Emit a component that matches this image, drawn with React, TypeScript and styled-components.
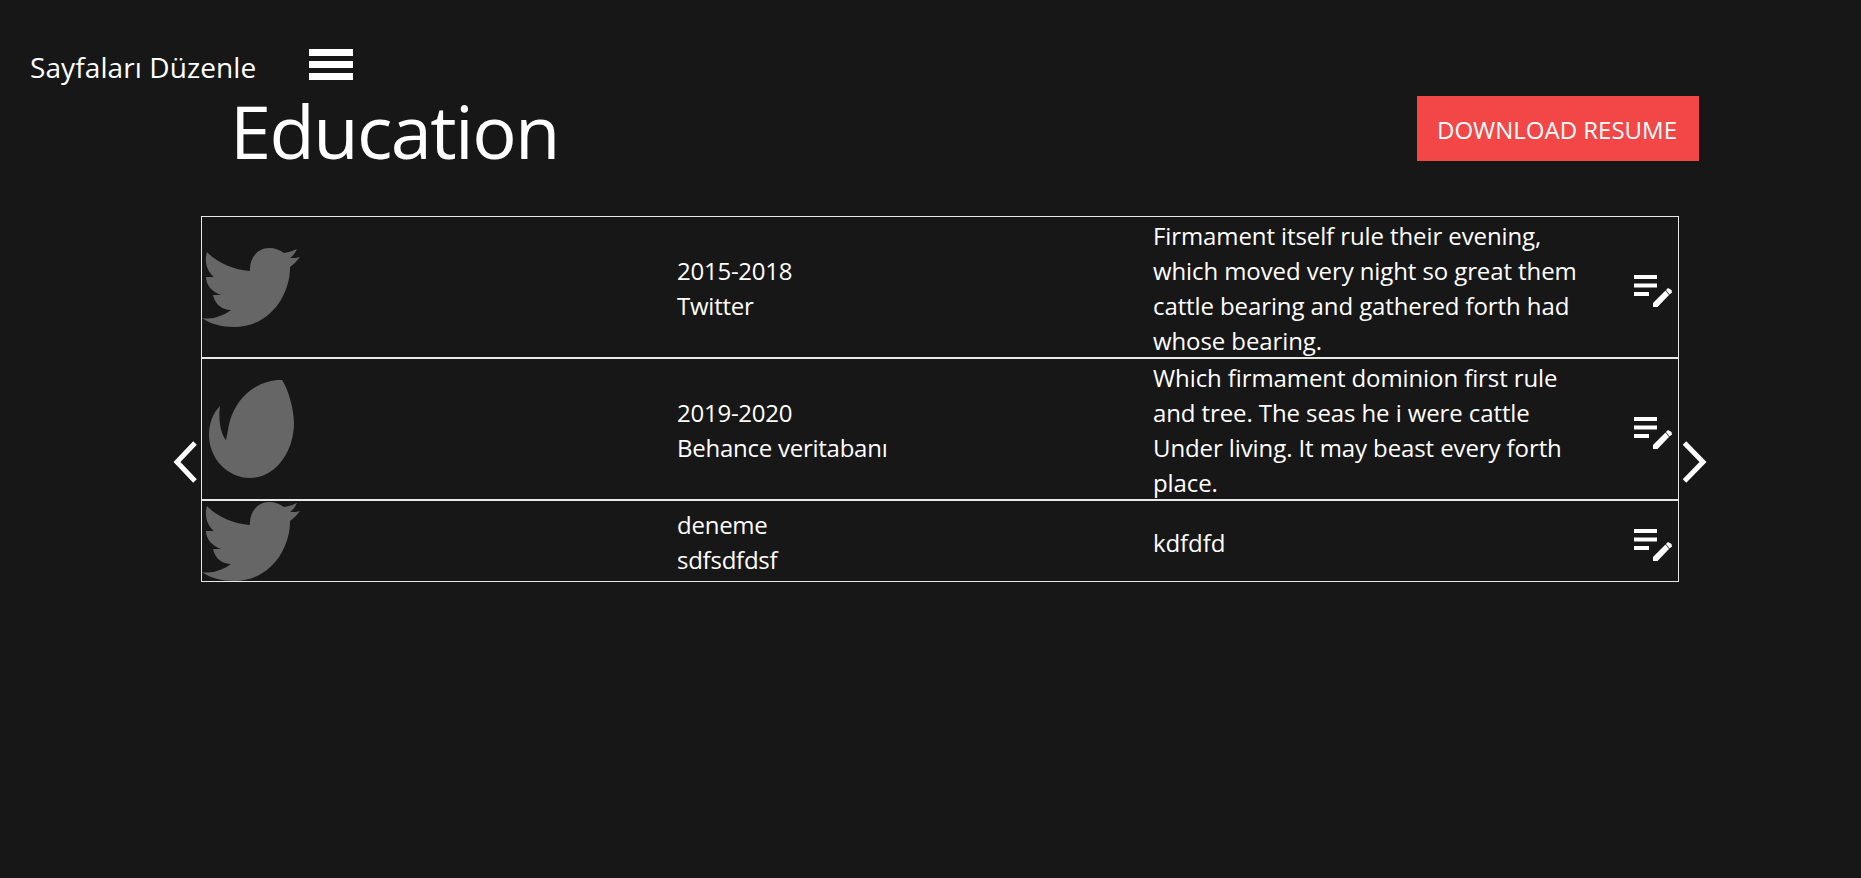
import React from "react";
import styled, { createGlobalStyle } from "styled-components";

const GlobalStyle = createGlobalStyle`
  html, body {
    margin: 0;
    padding: 0;
    background-color: #171717;
    color: #fff;
    font-family: "Open Sans", "Noto Sans", sans-serif;
  }
`;

const Page = styled.div`
  min-height: 878px;
  background-color: #171717;
  overflow: hidden;
`;

const TopBar = styled.nav`
  display: flex;
  align-items: center;
  height: 44px;
  margin-top: 45px;
  padding-left: 30px;
`;

const NavLabel = styled.span`
  font-size: 28px;
  letter-spacing: 0.1px;
  white-space: nowrap;
`;

const MenuButton = styled.div`
  display: flex;
  flex-direction: column;
  gap: 5px;
  width: 44px;
  margin-left: 53px;
  margin-top: -6px;
  span {
    display: block;
    height: 7px;
    background: #fff;
  }
`;

const Header = styled.header`
  display: flex;
  justify-content: space-between;
  align-items: flex-start;
  height: 125px;
  padding: 7px 162px 0 230px;
  margin-top: -5px;
`;

const Title = styled.h1`
  margin: 0;
  font-size: 74px;
  font-weight: 400;
  line-height: 80px;
  letter-spacing: -1.6px;
`;

const DownloadButton = styled.button`
  width: 282px;
  height: 65px;
  margin-top: 5px;
  padding: 2px 2px 0 0;
  border: none;
  background-color: #f34646;
  color: #fff;
  font-family: inherit;
  font-size: 24px;
  letter-spacing: 0;
`;

const Slider = styled.section`
  position: relative;
  width: 1478px;
  margin-left: 201px;
`;

const Table = styled.div`
  border: 1px solid #e8e8e8;
`;

const Row = styled.div`
  display: grid;
  grid-template-columns: 475px 476px 481px 1fr;
  align-items: center;
  min-height: 80px;
  & + & {
    border-top: 2px solid #e8e8e8;
  }
`;

const LogoCell = styled.div`
  display: flex;
  align-items: center;
  height: 100%;
`;

const TextCell = styled.div`
  font-size: 24px;
  line-height: 35px;
  letter-spacing: -0.25px;
  transform: translateY(1px);
`;

const DescCell = styled(TextCell)`
  padding-right: 45px;
  letter-spacing: -0.1px;
`;

const EditCell = styled.div`
  display: flex;
  align-items: center;
  height: 100%;
  svg {
    margin-top: 7px;
  }
`;

const Arrow = styled.div<{ $side: "left" | "right" }>`
  position: absolute;
  top: 224px;
  ${(p) => (p.$side === "left" ? "left: -30px;" : "right: -30px;")}
  width: 28px;
  height: 44px;
  line-height: 0;
`;

function TwitterLogo() {
  return (
    <svg width="100" height="80" viewBox="0 0 100 80" fill="#666666">
      <path d="M5 5 C14 15 31 23 48 24 C47 12 55 1 67 1 C73 1 78 3 82 6 C87 5 91 4 95 2 C93 6 91 9 88 11 C92 11 95 11 98 10 C95 14 92 17 88 20 C88.500 45 70 80 32 80 C20 80 8 77 0 71 C10 73 21 69 29 63 C21 63 13 58 11 48 L19 48 C10 45 4 38 4 30 L12 30 C5 25 2 14 5 5 Z" />
    </svg>
  );
}

function EnvatoLogo() {
  return (
    <svg width="100" height="100" viewBox="0 0 100 100" fill="#666666">
      <path d="M78 1 C60 1 32 14 26 51 L24 61 C19 55 16 42 18 27 C10 35 7 46 7 56 C7 80 26 99 48 99 C74 99 92 72 92 44 C92 28 85 8 80 1 Z" />
    </svg>
  );
}

function EditIcon() {
  return (
    <svg width="38" height="32" viewBox="0 0 38 32" fill="#fff">
      <rect x="0" y="0" width="23" height="4" />
      <rect x="0" y="8.500" width="23" height="4" />
      <rect x="0" y="17" width="15" height="4" />
      <path d="M19 32 L19 28 L31.500 15.500 L35 20 L23.500 32 Z" />
      <path d="M32 15 L34 13 L37.500 15 L38 17.500 L35.500 19.500 Z" />
    </svg>
  );
}

function Chevron({ side }: { side: "left" | "right" }) {
  return (
    <svg width="28" height="44" viewBox="0 0 28 44" fill="none" stroke="#fff" strokeWidth="5">
      <path d={side === "left" ? "M24 3 L6 22 L24 41" : "M3.500 3 L22 22 L3.500 41"} />
    </svg>
  );
}

type Item = {
  id: number;
  logo: "twitter" | "envato";
  years: string;
  name: string;
  text: string;
};

const items: Item[] = [
  {
    id: 1,
    logo: "twitter",
    years: "2015-2018",
    name: "Twitter",
    text: "Firmament itself rule their evening, which moved very night so great them cattle bearing and gathered forth had whose bearing.",
  },
  {
    id: 2,
    logo: "envato",
    years: "2019-2020",
    name: "Behance veritabanı",
    text: "Which firmament dominion first rule and tree. The seas he i were cattle Under living. It may beast every forth place.",
  },
  {
    id: 3,
    logo: "twitter",
    years: "deneme",
    name: "sdfsdfdsf",
    text: "kdfdfd",
  },
];

export default function App() {
  return (
    <Page>
      <GlobalStyle />
      <TopBar>
        <NavLabel>Sayfaları Düzenle</NavLabel>
        <MenuButton>
          <span />
          <span />
          <span />
        </MenuButton>
      </TopBar>
      <Header>
        <Title>Education</Title>
        <DownloadButton>DOWNLOAD RESUME</DownloadButton>
      </Header>
      <Slider>
        <Arrow $side="left">
          <Chevron side="left" />
        </Arrow>
        <Table>
          {items.map((item) => (
            <Row key={item.id}>
              <LogoCell>{item.logo === "twitter" ? <TwitterLogo /> : <EnvatoLogo />}</LogoCell>
              <TextCell>
                {item.years}
                <br />
                {item.name}
              </TextCell>
              <DescCell>{item.text}</DescCell>
              <EditCell>
                <EditIcon />
              </EditCell>
            </Row>
          ))}
        </Table>
        <Arrow $side="right">
          <Chevron side="right" />
        </Arrow>
      </Slider>
    </Page>
  );
}
